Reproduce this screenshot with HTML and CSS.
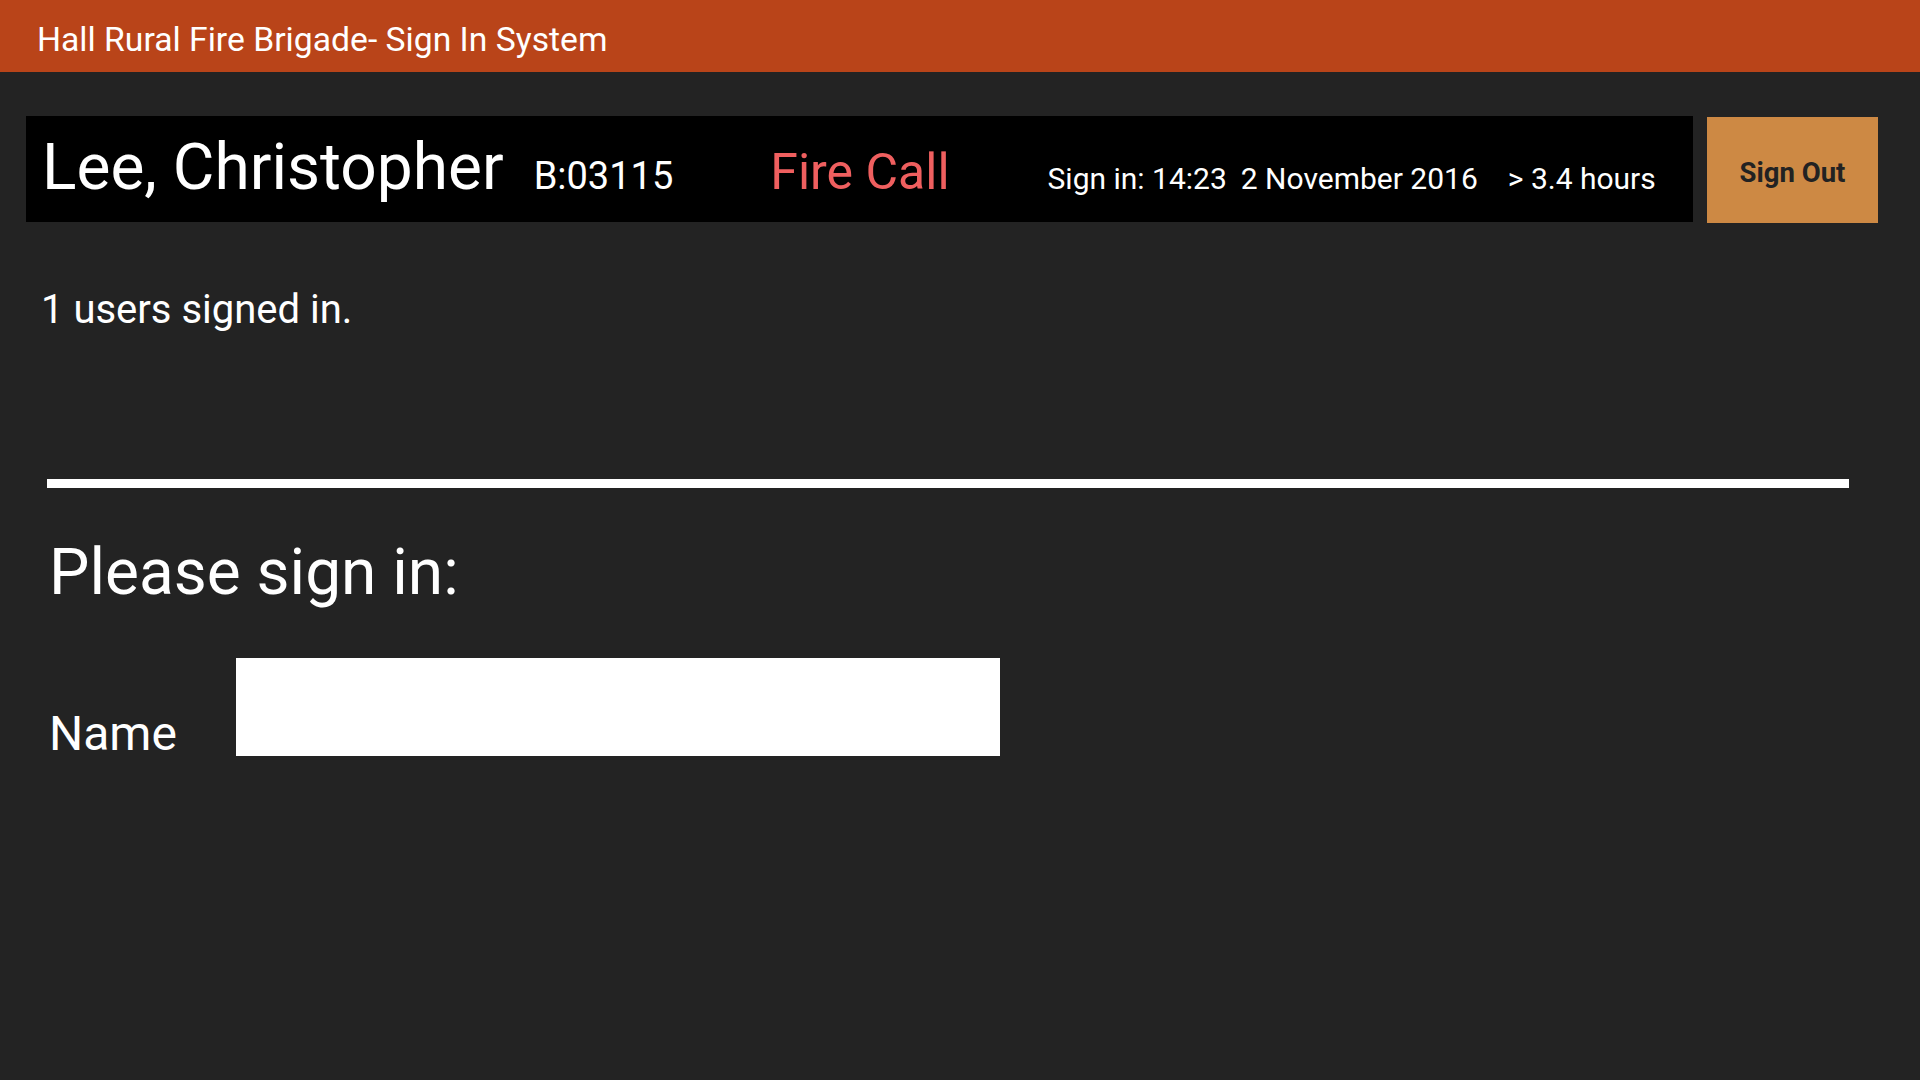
FILE: index.html
```html
<!DOCTYPE html>
<html lang="en">
<head>
<meta charset="utf-8">
<title>Hall Rural Fire Brigade- Sign In System</title>
<link rel="stylesheet" href="styles.css">
</head>
<body>
<header class="topbar">
  <span class="topbar-title">Hall Rural Fire Brigade- Sign In System</span>
</header>
<main class="page">
  <section class="user-row">
    <div class="user-card">
      <span class="user-name">Lee, Christopher</span>
      <span class="user-id">B:03115</span>
      <span class="user-activity">Fire Call</span>
      <span class="user-signin">Sign in: 14:23</span>
      <span class="user-date">2 November 2016</span>
      <span class="user-duration">&gt; 3.4 hours</span>
    </div>
    <button class="signout-btn" type="button">Sign Out</button>
  </section>
  <p class="users-count">1 users signed in.</p>
  <hr class="divider">
  <h1 class="signin-title">Please sign in:</h1>
  <form class="signin-form">
    <label class="signin-label" for="name">Name</label>
    <input class="signin-input" id="name" type="text">
  </form>
</main>
</body>
</html>
```
FILE: styles.css
```css
html, body {
  margin: 0;
  padding: 0;
}
body {
  background: #232323;
  color: #ffffff;
  font-family: Roboto, "Noto Sans", sans-serif;
  width: 1920px;
  height: 1080px;
  overflow: hidden;
}
.topbar {
  height: 72px;
  box-sizing: border-box;
  background: #b94419;
  padding: 7px 0 0 37px;
  line-height: 65px;
}
.topbar-title {
  font-size: 33.7px;
  color: #ffffff;
}
.page {
  padding: 44px 42px 0 26px;
}
.user-row {
  display: flex;
  gap: 14px;
  height: 106px;
}
.user-card {
  flex: 1;
  background: #000000;
  display: flex;
  align-items: baseline;
  padding: 14px 0 0 16px;
  box-sizing: border-box;
  white-space: nowrap;
}
.user-name {
  font-size: 64px;
}
.user-id {
  font-size: 38px;
  margin-left: 30px;
}
.user-activity {
  font-size: 50px;
  color: #ef5f5f;
  margin-left: 97px;
}
.user-signin {
  font-size: 30px;
  margin-left: 98px;
}
.user-date {
  font-size: 30px;
  margin-left: 14px;
}
.user-duration {
  font-size: 30px;
  margin-left: 30px;
}
.signout-btn {
  width: 171px;
  height: 106px;
  margin-top: 1px;
  border: 0;
  background: #cd8944;
  color: #222222;
  font-family: Roboto, "Noto Sans", sans-serif;
  font-weight: 700;
  font-size: 27.5px;
  padding: 5px 0 0;
}
.users-count {
  margin: 64px 0 0 15px;
  font-size: 40px;
  line-height: normal;
}
.divider {
  margin: 146px 29px 0 21px;
  height: 9px;
  border: 0;
  background: #ffffff;
}
.signin-title {
  margin: 47px 0 0 23px;
  font-size: 64px;
  font-weight: 400;
  line-height: normal;
}
.signin-form {
  margin: 48px 0 0 23px;
  display: flex;
  align-items: flex-end;
}
.signin-label {
  width: 187px;
  font-size: 48px;
  line-height: normal;
  margin-bottom: -5.5px;
}
.signin-input {
  width: 764px;
  height: 98px;
  box-sizing: border-box;
  border: 0;
  background: #ffffff;
  margin: 0;
  padding: 0 12px;
  font-size: 40px;
  font-family: Roboto, "Noto Sans", sans-serif;
}
```
